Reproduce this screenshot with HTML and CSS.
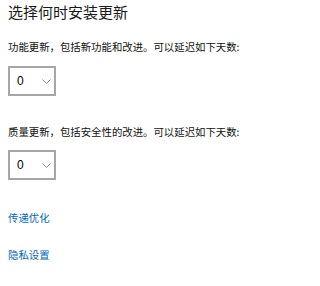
FILE: index.html
```html
<!DOCTYPE html>
<html lang="zh-CN">
<head>
<meta charset="utf-8">
<link rel="stylesheet" href="styles.css">
</head>
<body>
<main class="page">
  <h1 class="title">选择何时安装更新</h1>
  <p class="label label-first">功能更新，包括新功能和改进。可以延迟如下天数:</p>
  <div class="select select-first">
    <span class="value">0</span>
    <svg class="chev" width="9" height="5" viewBox="0 0 9 5"><path d="M0.5 0.5 L4.5 4.5 L8.5 0.5" fill="none" stroke="#8a8a8a" stroke-width="1"/></svg>
  </div>
  <p class="label label-second">质量更新，包括安全性的改进。可以延迟如下天数:</p>
  <div class="select select-second">
    <span class="value">0</span>
    <svg class="chev" width="9" height="5" viewBox="0 0 9 5"><path d="M0.5 0.5 L4.5 4.5 L8.5 0.5" fill="none" stroke="#8a8a8a" stroke-width="1"/></svg>
  </div>
  <a class="link link-first" href="#">传递优化</a>
  <a class="link link-second" href="#">隐私设置</a>
</main>
</body>
</html>
```
FILE: styles.css
```css
html, body {
  margin: 0;
  padding: 0;
  background: #ffffff;
}
body {
  font-family: "Noto Sans CJK SC", "Noto Sans", sans-serif;
  color: #000000;
}
.page {
  display: flex;
  flex-direction: column;
  align-items: flex-start;
  padding-left: 8px;
}
.title {
  margin: 0;
  font-size: 15px;
  line-height: 24px;
  font-weight: 400;
  color: #1a1a1a;
}
.label {
  margin: 0;
  font-size: 10.4px;
  line-height: 14px;
  color: #111111;
}
.label-first { margin-top: 16px; }
.label-second { margin-top: 29px; }
.select {
  box-sizing: border-box;
  width: 48px;
  height: 30px;
  border: 2px solid #a6a6a6;
  display: flex;
  align-items: center;
  padding-left: 7px;
}
.select-first { margin-top: 12px; }
.select-second { margin-top: 11px; }
.value {
  font-family: "Liberation Sans", sans-serif;
  font-size: 12px;
  line-height: 14px;
  width: 25px;
}
.chev {
  display: block;
  margin-top: 1px;
}
.link {
  font-size: 10.4px;
  line-height: 14px;
  color: #0067b8;
  text-decoration: none;
}
.link-first { margin-top: 31px; }
.link-second { margin-top: 23px; }
```
